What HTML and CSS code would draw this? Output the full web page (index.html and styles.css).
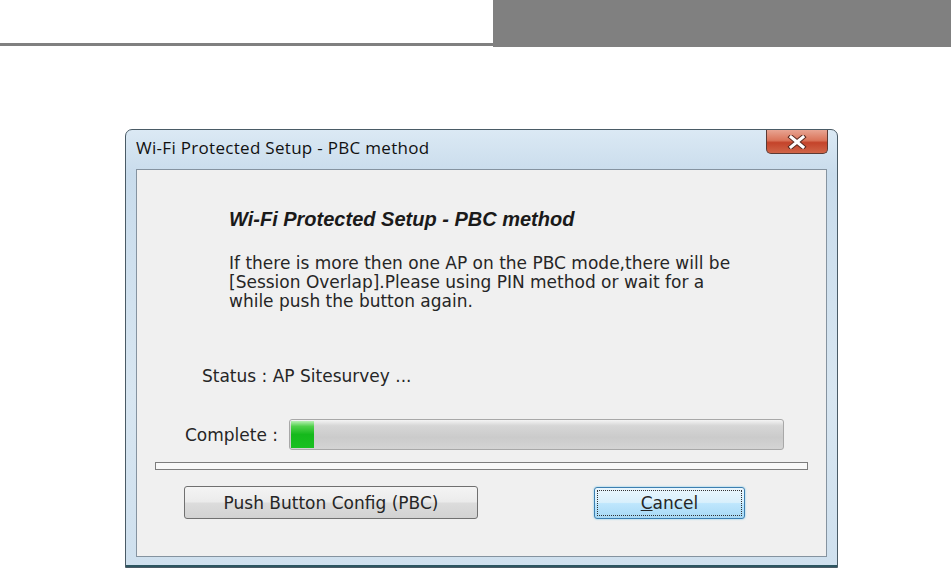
FILE: index.html
```html
<!doctype html>
<html>

<head>
    <meta charset="UTF-8">
    <title>Wi-Fi Protected Setup - PBC method</title>
    <link rel="stylesheet" href="styles.css">
</head>

<body>
    <div class="top">
        <div class="top-line"></div>
        <div class="top-box"></div>
    </div>

    <div class="win">
        <div class="win-title">
            <span>Wi-Fi Protected Setup - PBC method</span>
            <div class="close">
                <svg width="20" height="14" viewBox="0 0 20 14">
                    <path d="M4 2 L16 12 M16 2 L4 12" stroke="#5a2a20" stroke-width="5" stroke-linecap="square" />
                    <path d="M4 2 L16 12 M16 2 L4 12" stroke="#fff" stroke-width="3" stroke-linecap="square" />
                </svg>
            </div>
        </div>
        <div class="client">
            <h1 class="head">Wi-Fi Protected Setup - PBC method</h1>
            <p class="info">If there is more then one AP on the PBC mode,there will be<br>[Session Overlap].Please using PIN method or wait for a<br>while push the button again.</p>
            <p class="status">Status : AP Sitesurvey ...</p>
            <div class="progress-row">
                <span class="label">Complete :</span>
                <div class="bar">
                    <div class="chunk"></div>
                </div>
            </div>
            <div class="sep"></div>
            <div class="buttons">
                <div class="btn btn-pbc">Push Button Config (PBC)</div>
                <div class="btn btn-cancel"><span class="focus"><u>C</u>ancel</span></div>
            </div>
        </div>
    </div>
</body>

</html>
```

FILE: styles.css
```css
* {
    margin: 0;
    padding: 0;
    box-sizing: border-box;
}

body {
    background: #fff;
    font-family: "DejaVu Sans", sans-serif;
    color: #262626;
    overflow: hidden;
}

.top {
    display: flex;
    align-items: flex-start;
    height: 47px;
}
.top-line {
    width: 493px;
    height: 3px;
    margin-top: 43px;
    background: #808080;
}
.top-box {
    flex: 1;
    height: 47px;
    background: #808080;
}

.win {
    width: 713px;
    height: 439px;
    margin: 82px 0 0 125px;
    border: 1px solid #4a5b66;
    border-radius: 7px 7px 0 0;
    background: linear-gradient(180deg, #dbe9f4 0%, #c9dcec 10%, #d8e6f1 60%, #cfe0ee 100%);
    padding: 0 10px 10px 10px;
    display: flex;
    flex-direction: column;
    box-shadow: inset 0 -2px 0 #2d5560;
}

.win-title {
    height: 39px;
    display: flex;
    align-items: flex-start;
    justify-content: space-between;
    font-family: "Open Sans", sans-serif;
    font-size: 17px;
    color: #111;
}
.win-title span {
    margin-top: 6px;
    letter-spacing: 0.3px;
}
.close {
    width: 62px;
    height: 24px;
    margin-right: -1px;
    border: 1px solid #5b3a34;
    border-top: none;
    border-radius: 0 0 5px 5px;
    background: linear-gradient(180deg, #e8a492 0%, #da745a 45%, #c4432a 55%, #d06548 100%);
    display: flex;
    align-items: center;
    justify-content: center;
}

.client {
    flex: 1;
    background: #f0f0f0;
    border: 1px solid #8593a0;
    display: flex;
    flex-direction: column;
}

.head {
    font-family: "Liberation Sans", Arial, sans-serif;
    font-weight: bold;
    font-style: italic;
    font-size: 20px;
    line-height: 23px;
    margin: 38px 0 0 92px;
    color: #1a1a1a;
}
.info {
    font-size: 17px;
    line-height: 19px;
    margin: 23px 0 0 92px;
}
.status {
    font-size: 17px;
    line-height: 20px;
    margin: 55px 0 0 65px;
}

.progress-row {
    display: flex;
    align-items: center;
    margin: 33px 0 0 48px;
}
.label {
    font-size: 17px;
    width: 104px;
}
.bar {
    width: 495px;
    height: 31px;
    border: 1px solid #a8a8a8;
    border-radius: 3px;
    background: linear-gradient(180deg, #f4f4f4 0%, #d6d6d6 20%, #cbcbcb 60%, #d4d4d4 100%);
    padding: 1px;
    display: flex;
}
.chunk {
    width: 23px;
    background: linear-gradient(180deg, #b8f0b4 0%, #4fd04a 20%, #15b91c 50%, #19c020 100%);
}

.sep {
    margin: 12px 18px 0 18px;
    height: 8px;
    border: 1px solid #7c7c7c;
    background: #f8f8f8;
}

.buttons {
    display: flex;
    align-items: center;
    margin: 16px 0 0 47px;
}
.btn {
    font-size: 17px;
    display: flex;
    align-items: center;
    justify-content: center;
    border-radius: 3px;
}
.btn-pbc {
    width: 294px;
    height: 33px;
    border: 1px solid #707070;
    background: linear-gradient(180deg, #f4f4f4 0%, #ebebeb 48%, #dcdcdc 52%, #d2d2d2 100%);
}
.btn-cancel {
    width: 151px;
    height: 32px;
    margin-left: 116px;
    border: 1px solid #3c7fb1;
    background: linear-gradient(180deg, #eaf6fd 0%, #d9f0fc 48%, #bee6fd 52%, #a7d9f5 100%);
    box-shadow: 0 0 2px #67c3e8;
    padding: 2px;
}
.focus {
    flex: 1;
    align-self: stretch;
    display: flex;
    align-items: center;
    justify-content: center;
    border: 1px dotted #333;
}
```
